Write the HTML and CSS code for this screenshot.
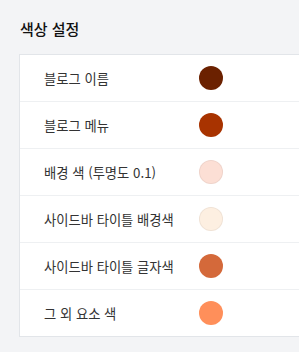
FILE: index.html
```html
<!DOCTYPE html>
<html lang="ko">
<head>
  <meta charset="UTF-8">
  <title>색상 설정</title>
  <link rel="stylesheet" href="styles.css">
</head>
<body>
  <section class="settings">
    <h2 class="settings-title">색상 설정</h2>
    <ul class="color-list">
      <li class="color-row"><span class="color-label">블로그 이름</span><span class="swatch" style="background:#6b2100"></span></li>
      <li class="color-row"><span class="color-label">블로그 메뉴</span><span class="swatch" style="background:#a83300"></span></li>
      <li class="color-row"><span class="color-label">배경 색 (투명도 0.1)</span><span class="swatch light" style="background:#fcdfd5"></span></li>
      <li class="color-row"><span class="color-label">사이드바 타이틀 배경색</span><span class="swatch light" style="background:#fdefe1"></span></li>
      <li class="color-row"><span class="color-label">사이드바 타이틀 글자색</span><span class="swatch" style="background:#d4693a"></span></li>
      <li class="color-row"><span class="color-label">그 외 요소 색</span><span class="swatch" style="background:#ff8f5a"></span></li>
    </ul>
  </section>
</body>
</html>
```
FILE: styles.css
```css
body {
  margin: 0;
  background-color: #f3f4f6;
  font-family: "Noto Sans CJK KR", "Noto Sans", sans-serif;
  color: #333;
}

.settings {
  padding: 18px 0 0 19px;
  overflow: hidden;
}

.settings-title {
  margin: 0 0 14px 1px;
  font-size: 15px;
  font-weight: 500;
  line-height: 22px;
  color: #111;
}

.color-list {
  list-style: none;
  margin: 0 -40px 0 0;
  padding: 0;
  background: #fff;
  border: 1px solid #e2e5e9;
}

.color-row {
  display: flex;
  align-items: center;
  height: 46px;
  padding-left: 24px;
  border-top: 1px solid #eef0f2;
}

.color-row:first-child {
  border-top: none;
}

.color-label {
  width: 155px;
  font-size: 13.3px;
  color: #333;
}

.swatch {
  width: 24px;
  height: 24px;
  border-radius: 50%;
  box-sizing: border-box;
}

.swatch.light {
  border: 1px solid rgba(0, 0, 0, 0.05);
}
```
